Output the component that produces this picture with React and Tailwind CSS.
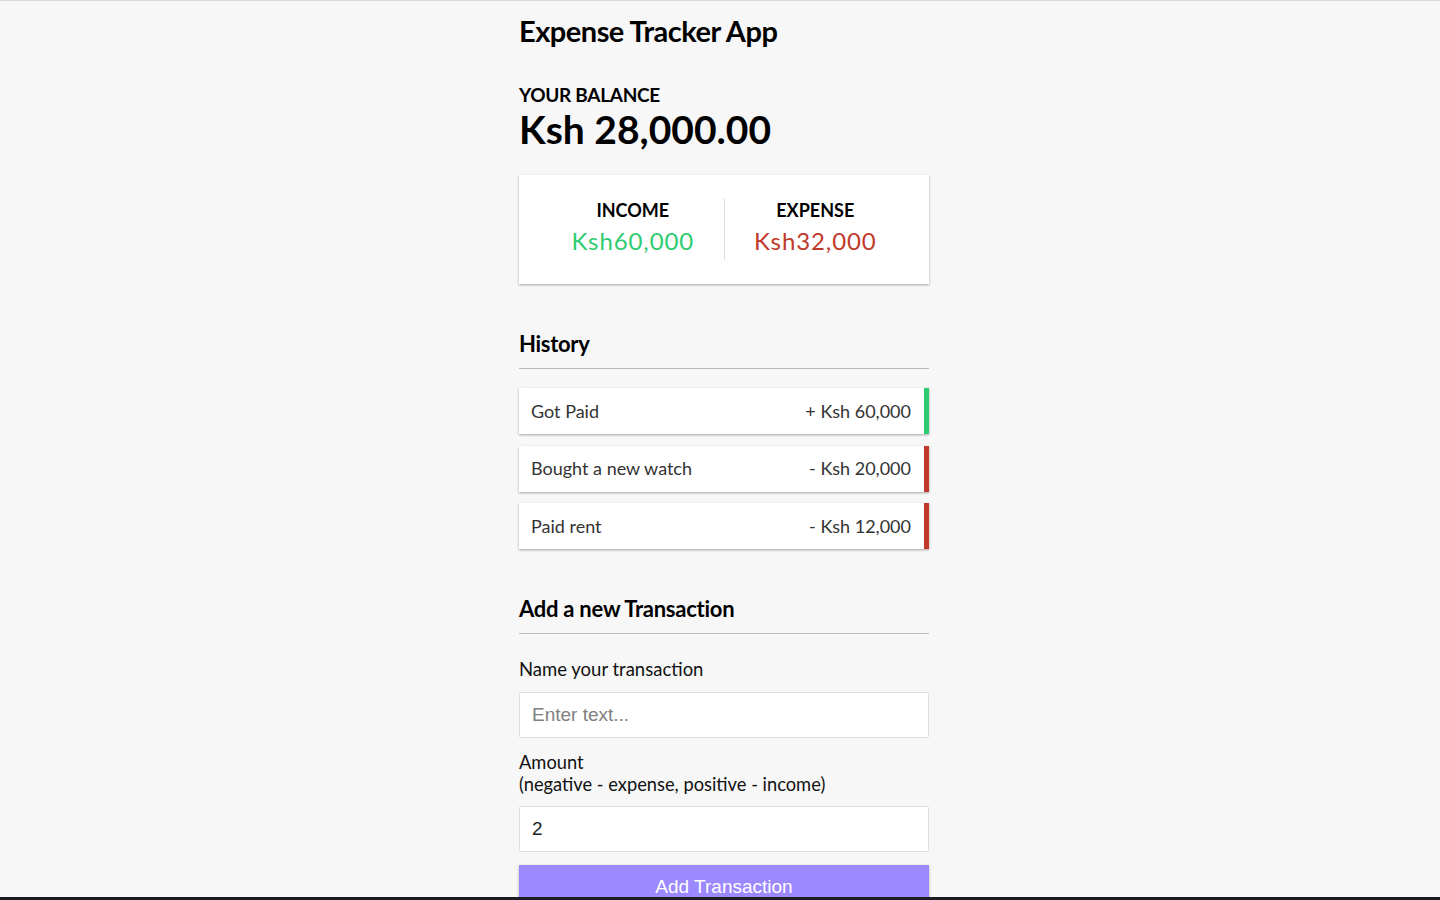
import React from "react";

const shadow = "shadow-[0_1px_3px_rgba(0,0,0,0.12),0_1px_2px_rgba(0,0,0,0.24)]";

function Item({ text, amount, plus }) {
  return (
    <li
      className={`flex justify-between items-center bg-white text-[#333] h-[46px] pl-[12px] pr-[13px] text-[18px] ${shadow} border-r-[5px] ${
        plus ? "border-[#2ecc71]" : "border-[#c0392b]"
      }`}
    >
      <span>{text}</span>
      <span>{amount}</span>
    </li>
  );
}

export default function App() {
  return (
    <div
      className="h-[900px] flex flex-col overflow-hidden bg-[#f7f7f7] border-t border-[#d9d9d9]"
      style={{ fontFamily: "Lato, 'Open Sans', sans-serif" }}
    >
      <div className="flex-1 min-h-0 overflow-hidden flex justify-center pl-2">
        <div className="w-[410px] block">
          <h2 className="mt-[12px] text-[29px] font-bold text-black tracking-[-0.5px] leading-[36px]">
            Expense Tracker App
          </h2>
          <h4 className="mt-[35px] text-[19px] font-bold text-black uppercase leading-[22px] tracking-[-0.3px]">
            Your Balance
          </h4>
          <h1 className="text-[39px] font-bold text-black leading-[46px]">
            Ksh 28,000.00
          </h1>
          <div className={`mt-[23px] bg-white ${shadow} flex px-[23px] pt-[23px] pb-[24px]`}>
            <div className="flex-1 text-center border-r border-[#dedede] h-[62px] pt-[1px]">
              <h4 className="text-[18px] font-bold text-black uppercase leading-[22px]">Income</h4>
              <p className="text-[24px] tracking-[0.9px] text-[#2ecc71] leading-[30px] mt-[5px]">Ksh60,000</p>
            </div>
            <div className="flex-1 text-center h-[62px] pt-[1px]">
              <h4 className="text-[18px] font-bold text-black uppercase leading-[22px]">Expense</h4>
              <p className="text-[24px] tracking-[0.9px] text-[#c0392b] leading-[30px] mt-[5px]">Ksh32,000</p>
            </div>
          </div>
          <h3 className="mt-[46px] text-[22px] font-bold text-black leading-[28px] pb-[10px] border-b border-[#bbb] tracking-[-0.3px]">
            History
          </h3>
          <ul className="mt-[19px] flex flex-col gap-[11.5px]">
            <Item text="Got Paid" amount="+ Ksh 60,000" plus />
            <Item text="Bought a new watch" amount="- Ksh 20,000" />
            <Item text="Paid rent" amount="- Ksh 12,000" />
          </ul>
          <h3 className="mt-[46px] text-[22px] font-bold text-black leading-[28px] pb-[10px] border-b border-[#bbb] tracking-[-0.25px]">
            Add a new Transaction
          </h3>
          <form className="flex flex-col">
            <label className="mt-[23px] text-[18.5px] text-[#111] leading-[24px]">Name your transaction</label>
            <input
              type="text"
              placeholder="Enter text..."
              className="mt-[11px] h-[46px] bg-white border border-[#dedede] rounded-[2px] px-[12px] text-[19px] text-[#333] placeholder:text-[#808080] outline-none"
              style={{ fontFamily: "'Liberation Sans', Arial, sans-serif" }}
            />
            <label className="mt-[13px] text-[18.3px] text-[#111] leading-[22px]">
              Amount
              <br />
              (negative - expense, positive - income)
            </label>
            <input
              type="number"
              defaultValue="2"
              className="mt-[11px] h-[46px] bg-white border border-[#dedede] rounded-[2px] px-[12px] text-[19px] text-[#222] outline-none"
              style={{ fontFamily: "'Liberation Sans', Arial, sans-serif" }}
            />
            <button
              type="button"
              className={`mt-[13px] h-[46px] bg-[#9c88ff] text-white text-[19px] leading-[22px] pb-[2px] ${shadow}`}
              style={{ fontFamily: "'Liberation Sans', Arial, sans-serif" }}
            >
              Add Transaction
            </button>
          </form>
        </div>
      </div>
      <div className="h-[3px] shrink-0 bg-[#1a1d22]" />
    </div>
  );
}
